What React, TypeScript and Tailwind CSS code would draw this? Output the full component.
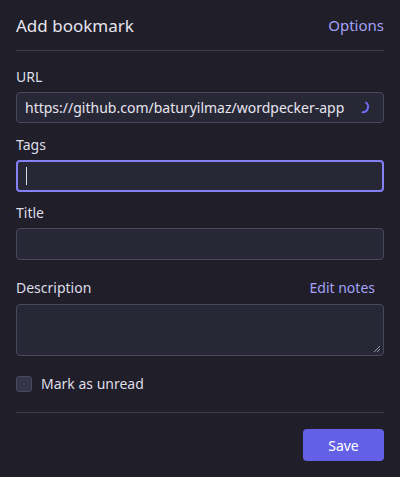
import React from "react";

export default function App() {
  const font = { fontFamily: '"Noto Sans", "Open Sans", sans-serif' };
  return (
    <div className="w-[400px] h-[477px] bg-[#1f1e29] text-[#e6e5ef] px-4 flex flex-col" style={font}>
      <div className="flex items-center justify-between h-[51px] border-b border-[#3e3c4e]">
        <span className="text-[17px] leading-none">Add bookmark</span>
        <button className="text-[15px] text-[#a4a1f6] leading-none">Options</button>
      </div>

      <label className="mt-[16px] text-[14px] leading-[20px] text-[#dedde8]">URL</label>
      <div className="mt-[5px] h-[31px] rounded-[4px] border border-[#4a485e] bg-[#282736] flex items-center pl-[8px] pr-[10px]">
        <span className="flex-1 text-[14px] text-[#e6e5ef] truncate">https://github.com/baturyilmaz/wordpecker-app</span>
        <svg width="14" height="14" viewBox="0 0 14 14" className="ml-2">
          <path d="M7 1.5 A5.5 5.5 0 0 1 3.5 11.3" fill="none" stroke="#6d6af0" strokeWidth="2" strokeLinecap="round" />
        </svg>
      </div>

      <label className="mt-[12px] text-[14px] leading-[20px] text-[#dedde8]">Tags</label>
      <div className="mt-[5px] h-[32px] rounded-[4px] border-2 border-[#8481f4] bg-[#282736] flex items-center pl-[8px]">
        <span className="w-px h-[18px] bg-[#d8d7e2]" />
      </div>

      <label className="mt-[11px] text-[14px] leading-[20px] text-[#dedde8]">Title</label>
      <div className="mt-[5px] h-[32px] rounded-[4px] border border-[#4a485e] bg-[#282736]" />

      <div className="mt-[18px] flex items-center justify-between">
        <label className="text-[14px] leading-[20px] text-[#dedde8]">Description</label>
        <button className="text-[14px] leading-[20px] text-[#a4a1f6] mr-[9px]">Edit notes</button>
      </div>
      <div className="mt-[6px] h-[52px] rounded-[4px] border border-[#4a485e] bg-[#282736] relative">
        <svg width="8" height="8" viewBox="0 0 8 8" className="absolute right-[2px] bottom-[2px]">
          <path d="M7 1 L1 7 M7 4 L4 7" stroke="#9a98aa" strokeWidth="1" />
        </svg>
      </div>

      <div className="mt-[18px] flex items-center gap-[9px]">
        <span className="w-[16px] h-[16px] rounded-[3px] border border-[#4a485e] bg-[#363548]" />
        <span className="text-[14px] leading-[20px] text-[#dedde8]">Mark as unread</span>
      </div>

      <div className="mt-[18px] border-t border-[#3e3c4e]" />

      <div className="mt-[16px] flex justify-end">
        <button className="w-[81px] h-[32px] rounded-[4px] bg-[#6360e6] text-white text-[14px]">Save</button>
      </div>
    </div>
  );
}
